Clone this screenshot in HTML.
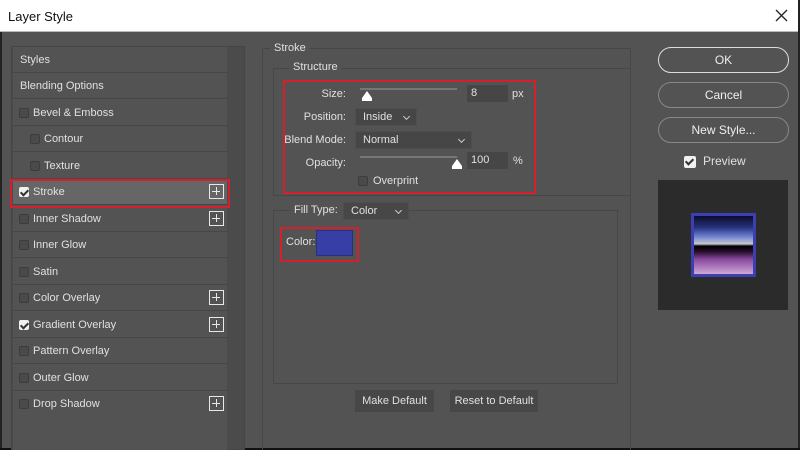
<!DOCTYPE html>
<html><head><meta charset="utf-8"><style>
*{margin:0;padding:0;box-sizing:border-box}
body{width:800px;height:450px;overflow:hidden;background:#535353;font-family:"Liberation Sans",sans-serif;font-size:11px;color:#e0e0e0;position:relative}
.a{position:absolute}
.title{left:0;top:0;width:800px;height:32px;background:#fff;color:#111;font-size:13px;padding:9px 0 0 8px;border-bottom:1px solid #bbb}
.row{position:absolute;left:13px;width:214px;height:26px;border-bottom:1px solid #474747;background:#535353;line-height:27px;font-size:11px}
.cb{position:absolute;width:10px;height:10px;border:1px solid #3c3c3c;background:#4a4a4a;border-radius:2px;top:8px}
.cbon{background:#f0f0f0;border-color:#f0f0f0}
.cbon:after{content:"";position:absolute;left:2px;top:0px;width:3px;height:6px;border:solid #333;border-width:0 2px 2px 0;transform:rotate(45deg)}
.plus{position:absolute;left:196px;top:5px;width:15px;height:15px;border:1.5px solid #e8e8e8}
.plus:before{content:"";position:absolute;left:2px;top:5.5px;width:8px;height:1.5px;background:#e8e8e8}
.plus:after{content:"";position:absolute;left:5.5px;top:2px;width:1.5px;height:8px;background:#e8e8e8}
.btn{position:absolute;border:1px solid #9a9a9a;border-radius:13px;text-align:center;color:#eee;font-size:12px}
.dd{position:absolute;background:#464646;border:1px solid #4e4e4e;padding-left:7px;font-size:11px;line-height:16px}
.dd:after{content:"";position:absolute;right:7px;top:5px;width:4px;height:4px;border:solid #ccc;border-width:0 1px 1px 0;transform:rotate(45deg)}
.inp{position:absolute;background:#464646;padding-left:4px;line-height:16px}
.lbl{position:absolute;text-align:right;width:80px}
.red{position:absolute;border:2px solid #d4202a}
</style></head><body>
<div class="a title">Layer Style</div>
<svg class="a" style="right:12px;top:9px" width="13" height="13" viewBox="0 0 13 13"><path d="M1 1L12 12M12 1L1 12" stroke="#222" stroke-width="1.3"/></svg>
<div class="a" style="left:0;top:32px;width:2px;height:418px;background:#222"></div>
<div class="a" style="right:0;top:0;width:2px;height:450px;background:#222"></div>
<div class="a" style="left:0;bottom:0;width:800px;height:2px;background:#111"></div>

<!-- left panel -->
<div class="a" style="left:11px;top:46px;width:234px;height:404px;background:#4b4b4b;border:1px solid #454545"></div>
<div class="a" style="left:13px;top:47px;width:214px;height:403px;background:#535353"></div>
<div class="row" style="top:47px;padding-left:7px">Styles</div>
<div class="row" style="top:73px;padding-left:7px">Blending Options</div>
<div class="row" style="top:100px"><span class="cb" style="left:6px"></span><span style="margin-left:20px">Bevel &amp; Emboss</span></div>
<div class="row" style="top:126px"><span class="cb" style="left:17px"></span><span style="margin-left:31px">Contour</span></div>
<div class="row" style="top:153px"><span class="cb" style="left:17px"></span><span style="margin-left:31px">Texture</span></div>
<div class="row" style="top:179px;background:#666"><span class="cb cbon" style="left:6px"></span><span style="margin-left:20px">Stroke</span><span class="plus"></span></div>
<div class="row" style="top:206px"><span class="cb" style="left:6px"></span><span style="margin-left:20px">Inner Shadow</span><span class="plus"></span></div>
<div class="row" style="top:232px"><span class="cb" style="left:6px"></span><span style="margin-left:20px">Inner Glow</span></div>
<div class="row" style="top:259px"><span class="cb" style="left:6px"></span><span style="margin-left:20px">Satin</span></div>
<div class="row" style="top:285px"><span class="cb" style="left:6px"></span><span style="margin-left:20px">Color Overlay</span><span class="plus"></span></div>
<div class="row" style="top:312px"><span class="cb cbon" style="left:6px"></span><span style="margin-left:20px">Gradient Overlay</span><span class="plus"></span></div>
<div class="row" style="top:338px"><span class="cb" style="left:6px"></span><span style="margin-left:20px">Pattern Overlay</span></div>
<div class="row" style="top:365px"><span class="cb" style="left:6px"></span><span style="margin-left:20px">Outer Glow</span></div>
<div class="row" style="top:391px;border-bottom:none"><span class="cb" style="left:6px"></span><span style="margin-left:20px">Drop Shadow</span><span class="plus"></span></div>
<div class="red" style="left:10px;top:179px;width:220px;height:29px"></div>

<!-- middle -->
<div class="a" style="left:262px;top:48px;width:369px;height:402px;border:1px solid #474747;border-bottom:none"></div>
<div class="a" style="left:270px;top:42px;background:#535353;padding:0 4px">Stroke</div>
<div class="a" style="left:273px;top:68px;width:358px;height:128px;border:1px solid #474747"></div>
<div class="a" style="left:289px;top:61px;background:#535353;padding:0 4px">Structure</div>
<div class="lbl" style="left:266px;top:88px">Size:</div>
<div class="a" style="left:360px;top:88px;width:97px;height:2px;background:#777"></div>
<div class="a" style="left:362px;top:91px;width:0;height:0;border-left:5px solid transparent;border-right:5px solid transparent;border-bottom:7px solid #fff"></div>
<div class="a" style="left:362px;top:98px;width:10px;height:3px;background:#fff"></div>
<div class="inp" style="left:467px;top:85px;width:41px;height:17px">8</div>
<div class="a" style="left:512px;top:88px">px</div>
<div class="lbl" style="left:266px;top:111px">Position:</div>
<div class="dd" style="left:355px;top:108px;width:62px;height:18px">Inside</div>
<div class="lbl" style="left:266px;top:134px">Blend Mode:</div>
<div class="dd" style="left:355px;top:131px;width:117px;height:18px">Normal</div>
<div class="lbl" style="left:266px;top:157px">Opacity:</div>
<div class="a" style="left:360px;top:156px;width:97px;height:2px;background:#777"></div>
<div class="a" style="left:452px;top:159px;width:0;height:0;border-left:5px solid transparent;border-right:5px solid transparent;border-bottom:7px solid #fff"></div>
<div class="a" style="left:452px;top:166px;width:10px;height:3px;background:#fff"></div>
<div class="inp" style="left:467px;top:152px;width:41px;height:17px">100</div>
<div class="a" style="left:513px;top:155px">%</div>
<div class="cb" style="left:358px;top:176px"></div>
<div class="a" style="left:373px;top:175px">Overprint</div>
<div class="red" style="left:283px;top:80px;width:253px;height:114px"></div>

<div class="a" style="left:273px;top:210px;width:345px;height:174px;border:1px solid #474747"></div>
<div class="a" style="left:290px;top:204px;background:#535353;padding:0 4px">Fill Type:</div>
<div class="dd" style="left:343px;top:202px;width:66px;height:18px;background:#474747">Color</div>
<div class="a" style="left:286px;top:236px">Color:</div>
<div class="a" style="left:316px;top:230px;width:37px;height:26px;background:#373fa6;border:1px solid #2a2f7c"></div>
<div class="red" style="left:280px;top:227px;width:79px;height:35px"></div>

<div class="a" style="left:355px;top:390px;width:79px;height:22px;background:#474747;text-align:center;line-height:22px">Make Default</div>
<div class="a" style="left:450px;top:390px;width:88px;height:22px;background:#474747;text-align:center;line-height:22px">Reset to Default</div>

<!-- right -->
<div class="btn" style="left:658px;top:47px;width:131px;height:26px;line-height:24px;border-color:#ddd">OK</div>
<div class="btn" style="left:658px;top:82px;width:131px;height:26px;line-height:24px;border-color:#888">Cancel</div>
<div class="btn" style="left:658px;top:117px;width:131px;height:26px;line-height:24px;border-color:#888">New Style...</div>
<div class="cb cbon" style="left:684px;top:156px;width:12px;height:12px"></div>
<div class="a" style="left:703px;top:154px;font-size:12px">Preview</div>
<div class="a" style="left:658px;top:180px;width:130px;height:130px;background:#2b2b2b"></div>
<div class="a" style="left:691px;top:213px;width:65px;height:64px;border:3px solid #3b3fb0;background:linear-gradient(#0a0c2a 0%,#27337e 20%,#6b7fd0 35%,#c7c8d0 48%,#000 52%,#2a1030 62%,#8a4aa0 75%,#d0a8d6 100%)"></div>
</body></html>
